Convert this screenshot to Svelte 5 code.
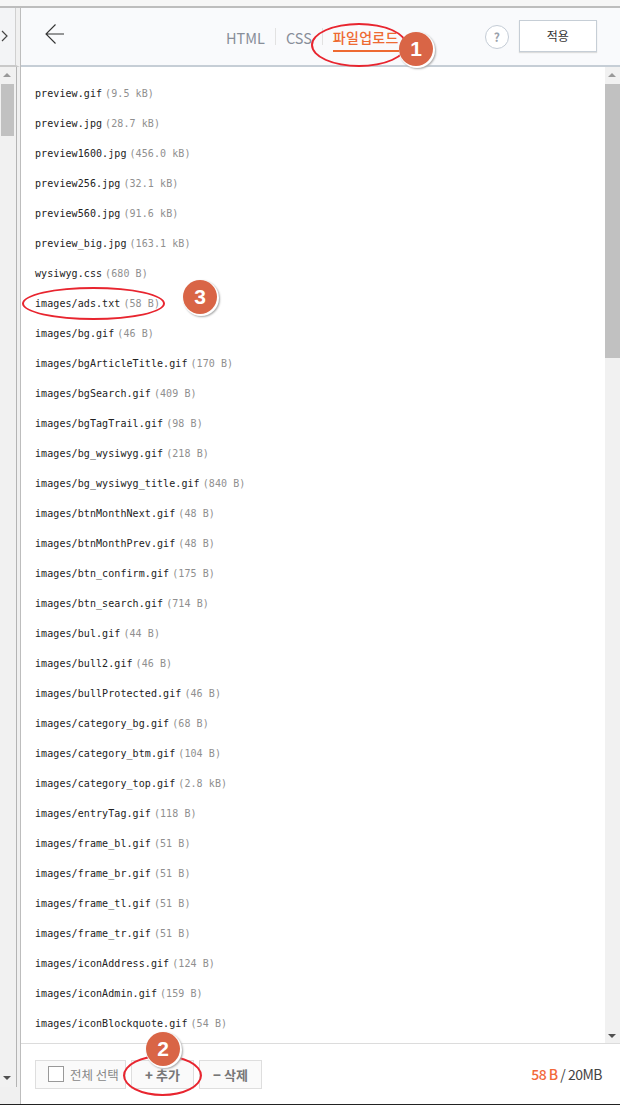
<script>
  const files = [
    ['preview.gif', '9.5 kB'], ['preview.jpg', '28.7 kB'], ['preview1600.jpg', '456.0 kB'],
    ['preview256.jpg', '32.1 kB'], ['preview560.jpg', '91.6 kB'], ['preview_big.jpg', '163.1 kB'],
    ['wysiwyg.css', '680 B'], ['images/ads.txt', '58 B'], ['images/bg.gif', '46 B'],
    ['images/bgArticleTitle.gif', '170 B'], ['images/bgSearch.gif', '409 B'], ['images/bgTagTrail.gif', '98 B'],
    ['images/bg_wysiwyg.gif', '218 B'], ['images/bg_wysiwyg_title.gif', '840 B'], ['images/btnMonthNext.gif', '48 B'],
    ['images/btnMonthPrev.gif', '48 B'], ['images/btn_confirm.gif', '175 B'], ['images/btn_search.gif', '714 B'],
    ['images/bul.gif', '44 B'], ['images/bull2.gif', '46 B'], ['images/bullProtected.gif', '46 B'],
    ['images/category_bg.gif', '68 B'], ['images/category_btm.gif', '104 B'], ['images/category_top.gif', '2.8 kB'],
    ['images/entryTag.gif', '118 B'], ['images/frame_bl.gif', '51 B'], ['images/frame_br.gif', '51 B'],
    ['images/frame_tl.gif', '51 B'], ['images/frame_tr.gif', '51 B'], ['images/iconAddress.gif', '124 B'],
    ['images/iconAdmin.gif', '159 B'], ['images/iconBlockquote.gif', '54 B']
  ];
  const marks = [
    { n: 1, x: 416, y: 49 },
    { n: 2, x: 163, y: 1049 },
    { n: 3, x: 200, y: 297 }
  ];
  const rings = [
    { x: 311, y: 23, w: 96, h: 44 },
    { x: 123, y: 1055, w: 79, h: 41 },
    { x: 22, y: 287, w: 143, h: 33 }
  ];
</script>

<div class="page">
  <div class="side">
    <div class="side-top">
      <svg width="8" height="14" viewBox="0 0 8 14"><path d="M1 2 6 7 1 12" fill="none" stroke="#444" stroke-width="1.2"/></svg>
    </div>
    <div class="side-rest">
      <div class="bar">
        <span class="up"></span>
        <div class="track"><div class="thumb side-thumb"></div></div>
        <span class="down"></span>
      </div>
    </div>
  </div>

  <div class="main">
    <header>
      <button class="back" aria-label="back">
        <svg width="19" height="20" viewBox="0 0 19 20"><path d="M19 10H1M10.5 .5 1 10l9.5 9.5" fill="none" stroke="#333" stroke-width="1.1"/></svg>
      </button>
      <nav>
        <span class="tab">HTML</span>
        <span class="sep"></span>
        <span class="tab">CSS</span>
        <span class="sep"></span>
        <span class="tab on">파일업로드</span>
      </nav>
      <span class="help">?</span>
      <button class="apply">적용</button>
    </header>

    <div class="body">
      <ul>
        {#each files as f}
          <li><span class="name">{f[0]}</span><span class="size">({f[1]})</span></li>
        {/each}
      </ul>
      <div class="bar">
        <span class="up"></span>
        <div class="track"><div class="thumb main-thumb"></div></div>
        <span class="down"></span>
      </div>
    </div>

    <footer>
      <button class="btn all"><span class="check"></span>전체 선택</button>
      <button class="btn bold add"><b>+</b> 추가</button>
      <button class="btn bold del"><b>−</b> 삭제</button>
      <div class="usage"><em>58 B</em> / 20MB</div>
    </footer>
  </div>

  {#each rings as r}
    <span class="ring" style="left:{r.x}px;top:{r.y}px;width:{r.w}px;height:{r.h}px"></span>
  {/each}
  {#each marks as m}
    <span class="mark" style="left:{m.x - 17}px;top:{m.y - 17}px">{m.n}</span>
  {/each}
</div>

<style>
  :global(body) { margin: 0; background: #fff; }
  .page {
    position: relative;
    width: 620px; height: 1105px;
    display: flex;
    box-sizing: border-box;
    padding-top: 6px;
    background: #f6f6f6;
    overflow: hidden;
    font-family: "Noto Sans CJK KR", "Noto Sans", sans-serif;
    border-bottom: 1px solid #222;
  }
  .side {
    width: 20px; flex: none;
    display: flex; flex-direction: column;
    border-top: 2px solid #bdbdbd;
    box-sizing: border-box;
    background: #f0f0f0;
  }
  .side-top {
    height: 59px;
    flex: none;
    display: flex; align-items: center;
    padding: 0 0 1px 1px;
    box-sizing: border-box;
    border-bottom: 2px solid #c9c9c9;
    border-right: 4px solid #f0f0f0;
    background: #f3f4f6;
    box-shadow: inset -1px 0 0 #d0d0d0;
  }
  .side-rest {
    flex: 1; min-height: 0;
    display: flex;
  }
  .side .bar { width: 16px; height: 1020px; border-right: 1px solid #b4b4b4; box-sizing: content-box; }
  .bar {
    width: 15px; flex: none;
    display: flex; flex-direction: column;
    background: #f1f1f1;
    position: relative;
  }
  .up, .down { height: 17px; flex: none; position: relative; }
  .up::after, .down::after {
    content: ""; position: absolute; left: 3px;
    border-left: 4px solid transparent; border-right: 4px solid transparent;
  }
  .up::after { top: 6px; border-bottom: 4px solid #999; }
  .down::after { bottom: 5px; border-top: 4px solid #505050; }
  .side .down::after { bottom: 7px; }
  .track { flex: 1; }
  .thumb { background: #c1c1c1; margin: 0 1px; }
  .side-thumb { height: 52px; margin: 0 2px 0 1px; }
  .main-thumb { height: 274px; margin: 0; }

  .main {
    flex: 1; min-width: 0;
    display: flex; flex-direction: column;
    border-left: 1px solid #bdbdbd;
    border-top: 2px solid #bdbdbd;
    background: #fff;
  }
  header {
    height: 59px; flex: none;
    box-sizing: border-box;
    display: flex; align-items: center;
    background: #f9fafc;
    border-bottom: 2px solid #c6ced6;
    padding-left: 24px;
  }
  .back { padding: 0; border: 0; background: none; width: 19px; height: 20px; margin-top: -6px; }
  nav {
    display: flex; align-items: center;
    margin-left: 162px;
    font-size: 14.5px;
    color: #888e99;
  }
  .tab { line-height: 20px; position: relative; top: 1px; }
  .sep { width: 1px; height: 17px; background: #e2e2e2; margin: 0 10px; }
  .on {
    color: #ee6a32; font-weight: 500; font-size: 14px;
    letter-spacing: .3px;
    border-bottom: 2px solid #ee6a32;
    padding: 0 1px 3px 0;
    margin-top: 3px;
  }
  .help {
    margin-left: 85px;
    width: 24px; height: 24px; border-radius: 50%;
    box-sizing: border-box;
    border: 1px solid #c4ccd6;
    background: #fff;
    color: #9aa1ab;
    font-size: 12px; font-weight: 700;
    display: flex; align-items: center; justify-content: center;
  }
  .apply {
    margin-left: 10px;
    width: 78px; height: 32px;
    box-sizing: border-box;
    border: 1px solid #c6ced6;
    background: #fff;
    font: inherit; font-size: 12px;
    color: #333;
    margin-top: -2px;
    box-shadow: 0 1px 1px #ddd;
  }

  .body { flex: 1; min-height: 0; display: flex; border-bottom: 1px solid #dcdcdc; }
  ul {
    flex: 1; margin: 0; padding: 12px 0 0 14px; list-style: none;
    overflow: hidden;
    font-family: "DejaVu Sans Mono", monospace;
    font-size: 10px;
  }
  li { height: 30px; line-height: 30px; white-space: nowrap; letter-spacing: 0.08px; }
  .name { color: #222; }
  .size { color: #8f8f8f; margin-left: 3px; }

  footer {
    height: 60px; flex: none;
    box-sizing: border-box;
    display: flex; align-items: center;
    padding: 0 18px 0 14px;
  }
  .btn {
    height: 29px; box-sizing: border-box;
    border: 1px solid #dedede;
    background: #fafafa;
    font: inherit; font-size: 13px;
    color: #888;
    padding: 0;
    display: flex; align-items: center; justify-content: center; gap: 3px;
  }
  .all { width: 91px; gap: 6px; justify-content: flex-start; padding-left: 12px; margin-right: 5px; font-size: 12.5px; }
  .check { width: 16px; height: 16px; box-sizing: border-box; border: 1px solid #999; background: #fff; }
  .bold { font-weight: 700; color: #777; }
  .add { width: 63px; margin-right: 5px; }
  .del { width: 63px; }
  .usage { margin-left: auto; font-size: 14px; color: #444; letter-spacing: -0.5px; }
  em { font-style: normal; font-weight: 500; color: #f2693a; }

  .ring {
    position: absolute;
    box-sizing: border-box;
    border: 2px solid #e8252f;
    border-radius: 50%;
  }
  .mark {
    position: absolute;
    width: 34px; height: 34px;
    border-radius: 50%;
    box-sizing: border-box;
    background: #d96546;
    color: #fff;
    font-family: "Liberation Sans", sans-serif;
    font-weight: 700; font-size: 21px;
    display: flex; align-items: center; justify-content: center;
    box-shadow: 1px 1px 0 1px #fff, 2px 2px 2px 1px #aaa;
  }
</style>
